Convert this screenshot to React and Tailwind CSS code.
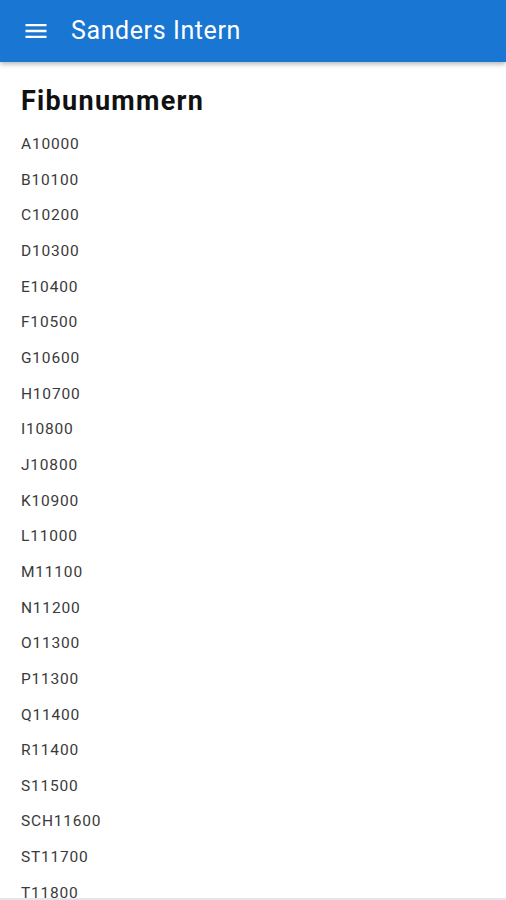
import React from "react";

const numbers = [
  "A10000", "B10100", "C10200", "D10300", "E10400", "F10500", "G10600",
  "H10700", "I10800", "J10800", "K10900", "L11000", "M11100", "N11200",
  "O11300", "P11300", "Q11400", "R11400", "S11500", "SCH11600", "ST11700",
  "T11800", "U11900", "V12000",
];

const App = () => {
  return (
    <div className="h-[900px] overflow-hidden bg-white font-['Roboto',sans-serif] border-b-2 border-[#e3e6ee]">
      {/* App bar */}
      <header className="relative z-10 flex h-[62px] items-center bg-[#1976d2] shadow-[0_2px_5px_rgba(0,0,0,0.3)]">
        <svg className="ml-[22px] h-[28px] w-[28px] text-white" viewBox="0 0 24 24" fill="currentColor">
          <path d="M3 18h18v-2H3v2zm0-5h18v-2H3v2zm0-7v2h18V6H3z" />
        </svg>
        <span className="ml-[21px] text-[25px] tracking-[0.6px] text-white">Sanders Intern</span>
      </header>

      {/* Content */}
      <main className="px-[21px] pt-[21px]">
        <h1 className="mb-[8px] text-[27px] font-bold leading-[36px] tracking-[1.3px] text-[#111]">Fibunummern</h1>
        <ul>
          {numbers.map((n) => (
            <li key={n} className="h-[35.67px] text-[15.5px] leading-[35.67px] tracking-[0.8px] text-[#3a3a3a]">
              {n}
            </li>
          ))}
        </ul>
      </main>
    </div>
  );
};

export default App;
